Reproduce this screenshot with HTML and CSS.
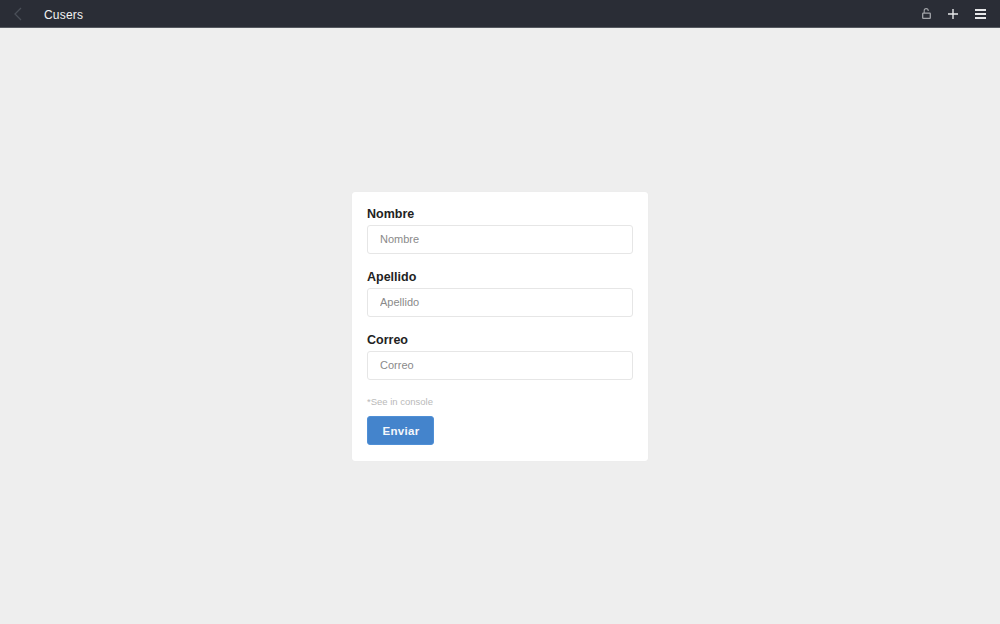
FILE: index.html
```html
<!DOCTYPE html>
<html lang="es">
<head>
<meta charset="utf-8">
<title>Cusers</title>
<link rel="stylesheet" href="styles.css">
</head>
<body>
<header class="bar">
  <div class="bar-left">
    <svg class="back" width="10" height="16" viewBox="0 0 10 16"><path d="M8 2 L2 8 L8 14" fill="none" stroke="#4a4f58" stroke-width="1.3"/></svg>
    <span class="title">Cusers</span>
  </div>
  <div class="bar-right">
    <svg class="lock" width="9" height="11" viewBox="0 0 9 11"><path d="M2.2 5 V2.6 a2 2 0 0 1 4 0 V3" fill="none" stroke="#a2a4a9" stroke-width="1.1"/><rect x=".7" y="5.2" width="7.6" height="5.1" rx=".6" fill="none" stroke="#a2a4a9" stroke-width="1.3"/></svg>
    <svg class="plus" width="12" height="12" viewBox="0 0 12 12"><path d="M6 1 V11 M1 6 H11" stroke="#e6e7e9" stroke-width="1.4"/></svg>
    <svg class="menu" width="11" height="12" viewBox="0 0 11 12"><path d="M0 2 H11 M0 6 H11 M0 10 H11" stroke="#e6e7e9" stroke-width="2"/></svg>
  </div>
</header>
<main class="stage">
  <form class="card">
    <label class="field">
      <span class="label">Nombre</span>
      <input class="input" type="text" placeholder="Nombre">
    </label>
    <label class="field">
      <span class="label">Apellido</span>
      <input class="input" type="text" placeholder="Apellido">
    </label>
    <label class="field">
      <span class="label">Correo</span>
      <input class="input" type="text" placeholder="Correo">
    </label>
    <p class="note">*See in console</p>
    <button class="submit" type="button">Enviar</button>
  </form>
</main>
</body>
</html>
```
FILE: styles.css
```css
* { box-sizing: border-box; }
html, body { margin: 0; height: 100%; }
body {
  display: flex;
  flex-direction: column;
  height: 624px;
  background: #eeeeee;
  font-family: "Liberation Sans", Arial, sans-serif;
  overflow: hidden;
}
.bar {
  flex: none;
  height: 28px;
  display: flex;
  justify-content: space-between;
  align-items: center;
  background: #2a2d36;
  border-bottom: 1px solid #555960;
  padding: 0 14px 0 13px;
}
.bar-left { display: flex; align-items: center; }
.back { display: block; }
.title { margin-left: 21px; padding-top: 2px; color: #f2f2f3; font-size: 12px; letter-spacing: .2px; }
.bar-right { display: flex; align-items: center; }
.lock { display: block; margin-right: 16px; }
.plus { display: block; margin-right: 16px; }
.menu { display: block; }
.stage {
  flex: 1;
  display: flex;
  justify-content: center;
  padding-top: 164px;
}
.card {
  width: 296px;
  height: 269px;
  background: #fff;
  border-radius: 3px;
  padding: 15px 15px 0;
  box-shadow: 0 0 1px rgba(0,0,0,.06);
}
.field { display: block; margin-bottom: 16px; }
.label {
  display: block;
  height: 18px;
  line-height: 14px;
  color: #222;
  font-size: 12.5px;
  font-weight: 700;
}
.input {
  display: block;
  width: 100%;
  height: 29px;
  padding: 0 12px 1px;
  border: 1px solid #e6e6e6;
  border-radius: 3px;
  background: #fff;
  font-family: inherit;
  font-size: 11px;
  outline: none;
}
.input::placeholder { color: #8a8a8a; opacity: 1; }
.note {
  margin: 0 0 7px;
  height: 13px;
  line-height: 11px;
  color: #b9b9b9;
  font-size: 9.5px;
}
.submit {
  display: block;
  width: 67px;
  height: 29px;
  border: 1px solid #4f8fd6;
  border-radius: 3px;
  background: #4484cc;
  color: #f4f7fb;
  font-family: inherit;
  font-size: 11.5px;
  font-weight: 700;
  letter-spacing: .3px;
  padding: 0 0 0 1px;
}
```
